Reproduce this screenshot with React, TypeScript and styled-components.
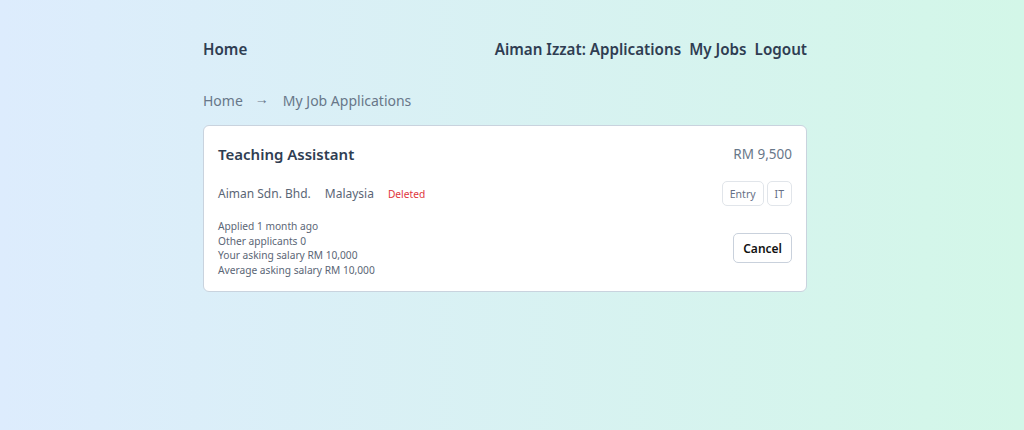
import React from "react";
import styled, { createGlobalStyle } from "styled-components";

const Global = createGlobalStyle`
  html, body { margin: 0; padding: 0; }
  body {
    font-family: "Noto Sans", "Open Sans", sans-serif;
    background: linear-gradient(90deg, #ddecfd 0%, #d3f7e8 100%);
    min-height: 430px;
  }
`;

const Shell = styled.div`
  padding: 36px 14px 0 0;
`;

const Page = styled.div`
  width: 604px;
  margin: 0 auto;
`;

const Nav = styled.nav`
  display: flex;
  justify-content: space-between;
  align-items: center;
  height: 26px;
`;

const NavLinks = styled.div`
  display: flex;
  gap: 8px;
`;

const NavLink = styled.a`
  font-size: 15.2px;
  font-weight: 600;
  color: #2f3d52;
  text-decoration: none;
`;

const Crumbs = styled.div`
  display: flex;
  margin-top: 26px;
  font-size: 14px;
  color: #687789;
  height: 24px;
  align-items: center;
`;

const Arrow = styled.span`
  font-family: "Liberation Sans", sans-serif;
  font-size: 14px;
  margin: 0 14px 0 12px;
  transform: translateY(-1px);
`;

const Card = styled.div`
  margin-top: 13px;
  background: #fff;
  border: 1px solid #c9d3de;
  border-radius: 6px;
  padding: 14px;
  display: flex;
  flex-direction: column;
`;

const Row = styled.div<{ $gap?: number; $h?: number }>`
  display: flex;
  justify-content: space-between;
  align-items: center;
  margin-top: ${(p) => p.$gap ?? 0}px;
  ${(p) => (p.$h ? `height: ${p.$h}px;` : "")}
`;

const Title = styled.div`
  font-size: 15px;
  font-weight: 600;
  color: #2f3d52;
`;

const Salary = styled.div`
  font-size: 13.5px;
  color: #687789;
`;

const Meta = styled.div`
  display: flex;
  align-items: center;
  gap: 14px;
  font-size: 12px;
  color: #5b6676;
`;

const Deleted = styled.span`
  font-size: 10.2px;
  color: #e0353b;
`;

const Tags = styled.div`
  display: flex;
  gap: 3px;
`;

const Tag = styled.span`
  font-size: 10.5px;
  color: #667085;
  border: 1px solid #e1e5ea;
  border-radius: 5px;
  padding: 0 7px;
  height: 23px;
  display: inline-flex;
  align-items: center;
`;

const Details = styled.div`
  font-size: 10.2px;
  color: #5b6676;
  line-height: 14.5px;
`;

const Button = styled.button`
  font-family: inherit;
  font-size: 12px;
  font-weight: 600;
  color: #111;
  background: #fff;
  border: 1px solid #c9d1dc;
  border-radius: 5px;
  height: 30px;
  padding: 0 9px;
`;

export default function App() {
  return (
    <>
      <Global />
      <Shell>
        <Page>
          <Nav>
            <NavLink href="#">Home</NavLink>
            <NavLinks>
              <NavLink href="#">Aiman Izzat: Applications</NavLink>
              <NavLink href="#">My Jobs</NavLink>
              <NavLink href="#">Logout</NavLink>
            </NavLinks>
          </Nav>
          <Crumbs>
            <span>Home</span>
            <Arrow>→</Arrow>
            <span>My Job Applications</span>
          </Crumbs>
          <Card>
            <Row $h={28}>
              <Title>Teaching Assistant</Title>
              <Salary>RM 9,500</Salary>
            </Row>
            <Row $gap={13}>
              <Meta>
                <span>Aiman Sdn. Bhd.</span>
                <span>Malaysia</span>
                <Deleted>Deleted</Deleted>
              </Meta>
              <Tags>
                <Tag>Entry</Tag>
                <Tag>IT</Tag>
              </Tags>
            </Row>
            <Row $gap={13}>
              <Details>
                <div>Applied 1 month ago</div>
                <div>Other applicants 0</div>
                <div>Your asking salary RM 10,000</div>
                <div>Average asking salary RM 10,000</div>
              </Details>
              <Button>Cancel</Button>
            </Row>
          </Card>
        </Page>
      </Shell>
    </>
  );
}
